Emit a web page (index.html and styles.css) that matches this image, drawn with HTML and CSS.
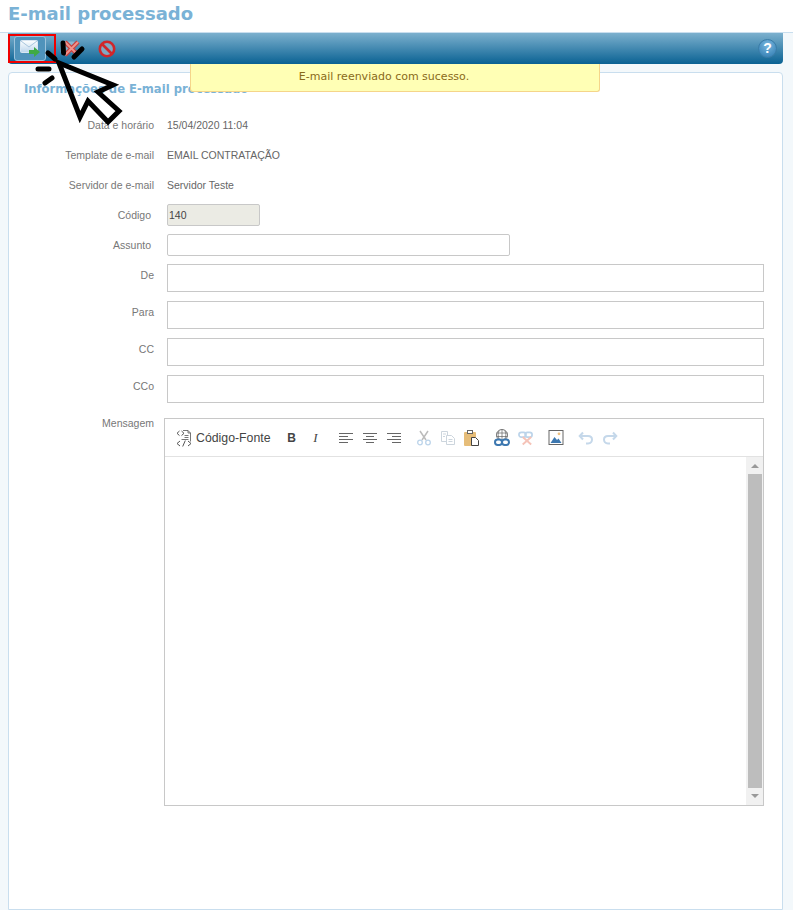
FILE: index.html
```html
<!DOCTYPE html>
<html lang="pt-BR">
<head>
<meta charset="utf-8">
<title>E-mail processado</title>
<link rel="stylesheet" href="styles.css">
</head>
<body>
<header class="page-header"><h1>E-mail processado</h1></header>
<main class="content">
  <nav class="toolbar">
    <div class="tool-highlight">
      <button class="tool tool-active" type="button" aria-label="Reenviar">
        <svg width="20" height="17" viewBox="0 0 20 17"><defs><linearGradient id="env" x1="0" y1="0" x2="0" y2="1"><stop offset="0" stop-color="#fff"/><stop offset="1" stop-color="#bcd6ec"/></linearGradient></defs><rect x="0.5" y="0.5" width="17" height="12" rx="1" fill="url(#env)" stroke="#d8e6f2"/><path d="M1 1l8 6 8-6" fill="none" stroke="#a9c6de"/><path d="M9 10h5V7l6 5-6 5v-3H9z" fill="#3faa44"/></svg>
      </button>
    </div>
    <button class="tool tool-x" type="button" aria-label="Excluir">
      <svg width="22" height="17" viewBox="0 0 22 17"><rect x="0.5" y="1.5" width="14" height="11" fill="#c9dbe8" opacity=".45"/><path d="M5 2l13 13M18 2L5 15" stroke="#c9413f" stroke-width="4.500"/><path d="M5 2l13 13M18 2L5 15" stroke="#f0938c" stroke-width="1.800"/></svg>
    </button>
    <button class="tool tool-stop" type="button" aria-label="Cancelar">
      <svg width="18" height="18" viewBox="0 0 18 18"><circle cx="9" cy="9" r="7.2" fill="#7fa9c4" stroke="#d0262a" stroke-width="2.6"/><path d="M4.5 4.5l9 9" stroke="#d0262a" stroke-width="2.6"/></svg>
    </button>
    <span class="help" aria-label="Ajuda">?</span>
  </nav>
  <div class="flash">E-mail reenviado com sucesso.</div>

  <section class="card">
    <h2>Informações de E-mail processado</h2>
    <div class="row row-text"><span class="label">Data e horário</span><span class="value">15/04/2020 11:04</span></div>
    <div class="row row-text"><span class="label">Template de e-mail</span><span class="value">EMAIL CONTRATAÇÃO</span></div>
    <div class="row row-text row-text-last"><span class="label">Servidor de e-mail</span><span class="value">Servidor Teste</span></div>
    <div class="row row-short"><span class="label label-inset">Código</span><div class="input input-code">140</div></div>
    <div class="row row-short"><span class="label label-inset">Assunto</span><div class="input input-subject"></div></div>
    <div class="row row-tall"><span class="label">De</span><div class="input input-wide"></div></div>
    <div class="row row-tall"><span class="label">Para</span><div class="input input-wide"></div></div>
    <div class="row row-tall"><span class="label">CC</span><div class="input input-wide"></div></div>
    <div class="row row-tall"><span class="label">CCo</span><div class="input input-wide"></div></div>
    <div class="row row-editor">
      <span class="label">Mensagem</span>
      <div class="editor">
        <div class="editor-bar">
          <svg class="ico" width="16" height="18" viewBox="0 0 16 18" fill="none" stroke="#555"><path d="M7 1.500h5l2.500 2.500v8.500M12 1.500V4h2.500M8.500 6.500h4M8.500 8.500h4M5.500 10.500h7" stroke-width=".8"/><path d="M3.500 2l-2.500 2.300 2.500 2.300M5.500 2L8 4.300 5.500 6.600M4 12l-3 2.500L4 17M12 12l3 2.500-3 2.500M9.300 11.500L6.700 17.500" stroke-width="1"/></svg>
          <span class="source-label">Código-Fonte</span>
          <span class="ico fmt-b">B</span>
          <span class="ico fmt-i">I</span>
          <svg class="ico group" width="16" height="14" viewBox="0 0 16 14" stroke="#666"><path d="M1 2.500h14M1 5.500h9M1 8.500h14M1 11.500h9"/></svg>
          <svg class="ico" width="16" height="14" viewBox="0 0 16 14" stroke="#666"><path d="M1 2.500h14M4 5.500h8M1 8.500h14M4 11.500h8"/></svg>
          <svg class="ico" width="16" height="14" viewBox="0 0 16 14" stroke="#666"><path d="M1 2.500h14M6 5.500h9M1 8.500h14M6 11.500h9"/></svg>
          <svg class="ico group" width="16" height="16" viewBox="0 0 16 16" fill="none"><path d="M4 1l6 9M12 1L6 10" stroke="#bbb" stroke-width="1.500"/><circle cx="4" cy="12.500" r="2.300" stroke="#bcd4ea" stroke-width="1.300"/><circle cx="12" cy="12.500" r="2.300" stroke="#bcd4ea" stroke-width="1.300"/></svg>
          <svg class="ico" width="16" height="16" viewBox="0 0 16 16" fill="#fff" stroke="#ccd5dd"><path d="M1.500 1.500h6v10h-6z"/><path d="M6.500 5.500h5l3 3v6h-8z"/><path d="M8.500 9.500h4M8.500 11.500h4M3 4h3M3 6.500h2" fill="none"/></svg>
          <svg class="ico" width="16" height="16" viewBox="0 0 16 16"><rect x="0" y="2" width="12" height="14" rx="1" fill="#e6bd79"/><rect x="3.500" y="0.500" width="5" height="3" fill="#fff" stroke="#666"/><path d="M7.500 7.500h4l3 3v5h-7z" fill="#fff" stroke="#444"/></svg>
          <svg class="ico group" width="16" height="17" viewBox="0 0 16 17" fill="none"><circle cx="8" cy="6" r="5.500" stroke="#666" stroke-width=".9"/><path d="M2.500 4h11M2.500 7.500h11M8 .5v10M5.200 1.500c-1.400 2.500-1.400 6 0 8.500M10.800 1.500c1.400 2.500 1.400 6 0 8.500" stroke="#666" stroke-width=".7"/><rect x="1" y="10.500" width="7" height="5.500" rx="2.700" fill="#fff" stroke="#3d78b0" stroke-width="2"/><rect x="8" y="10.500" width="7" height="5.500" rx="2.700" fill="#fff" stroke="#3d78b0" stroke-width="2"/></svg>
          <svg class="ico" width="17" height="17" viewBox="0 0 17 17" fill="none"><rect x="1" y="3" width="7.500" height="5" rx="2.500" stroke="#bcd4ea" stroke-width="1.800"/><rect x="7.500" y="3" width="7.500" height="5" rx="2.500" stroke="#bcd4ea" stroke-width="1.800"/><path d="M5 8l9 8M14 8l-9 8" stroke="#f5c3b8" stroke-width="2"/></svg>
          <svg class="ico group" width="15" height="15" viewBox="0 0 15 15"><rect x="0.500" y="0.500" width="14" height="14" fill="#fff" stroke="#666"/><path d="M2 13l4-6 2.500 3 1.500-1.500 3 4.500z" fill="#3d78b0"/><circle cx="10.500" cy="3.800" r="1.400" fill="#eec07f"/></svg>
          <svg class="ico group" width="16" height="14" viewBox="0 0 16 14" fill="none" stroke="#c5d8ea" stroke-width="2"><path d="M5 1.500L1.700 5 5 8.500M2 5h8c3 0 4 2 4 3.500S13 12.500 10 12.500H8"/></svg>
          <svg class="ico" width="16" height="14" viewBox="0 0 16 14" fill="none" stroke="#c5d8ea" stroke-width="2"><path d="M11 1.500L14.300 5 11 8.500M14 5H6c-3 0-4 2-4 3.500s1 4 4 4h2"/></svg>
        </div>
        <div class="editor-body">
          <div class="editor-text"></div>
          <div class="scrollbar">
            <span class="arrow arrow-up"></span>
            <span class="thumb"></span>
            <span class="arrow arrow-down"></span>
          </div>
        </div>
      </div>
    </div>
  </section>
</main>
<svg class="cursor" width="100" height="100" viewBox="0 0 100 100" fill="none" stroke="#000" stroke-width="5" stroke-linecap="round" stroke-linejoin="miter" aria-hidden="true">
  <path d="M29 24L50 78 58 62 78 83 89 72 68 53 83 46z"/>
  <path d="M18 14l7 6M8 30h11M15 44l7-5M33 4l0.500 10M44 18l8-8"/>
</svg>
</body>
</html>
```

FILE: styles.css
```css
* { box-sizing: border-box; }
html, body { margin: 0; padding: 0; }
body {
  height: 910px;
  overflow: hidden;
  position: relative;
  background: #f3f8fb;
  font-family: "Liberation Sans", Arial, sans-serif;
  font-size: 10.5px;
  color: #666;
}
.page-header {
  height: 33px;
  background: #fff;
  border-bottom: 1px solid #c9deee;
  padding: 0 8px;
}
.page-header h1 {
  margin: 0;
  font: bold 18px/28px "DejaVu Sans", Verdana, sans-serif;
  color: #7ab2d6;
}
.content {
  position: relative;
  padding: 0 10px 0 8px;
}
.toolbar {
  height: 31px;
  display: flex;
  align-items: center;
  background: linear-gradient(#7cb0ce, #0a6293);
  border-radius: 0 0 4px 4px;
}
.tool-highlight {
  width: 48px;
  height: 29px;
  border: 2px solid #f00000;
  padding-left: 4px;
  display: flex;
  align-items: center;
}
.tool {
  padding: 0;
  border: 0;
  background: none;
  display: flex;
  align-items: center;
  justify-content: center;
}
.tool-active {
  width: 32px;
  height: 25px;
  border: 1px solid #9cc3dc;
  border-radius: 3px;
  background: #4f93bb;
}
.tool-x { margin-left: 4px; }
.tool-stop { margin-left: 16px; }
.help {
  margin-left: auto;
  margin-right: 6px;
  width: 19px;
  height: 19px;
  border-radius: 50%;
  border: 1px solid #3a7ca8;
  background: radial-gradient(circle at 50% 30%, #7ab8e0, #2b78ae);
  color: #fff;
  font: bold 14px/17px "Liberation Sans", sans-serif;
  text-align: center;
}
.flash {
  position: absolute;
  left: 190px;
  top: 31px;
  width: 410px;
  height: 28px;
  padding-right: 22px;
  background: #ffffb5;
  border: 1px solid #f5d58a;
  border-top: 0;
  border-radius: 0 0 3px 3px;
  font: 11px/25px "DejaVu Sans", Verdana, sans-serif;
  color: #8a6a1a;
  text-align: center;
}
.card {
  margin-top: 8px;
  height: 838px;
  background: #fff;
  border: 1px solid #c9deee;
  border-radius: 4px 4px 0 0;
  padding: 0 18px 0 0;
}
.card h2 {
  margin: 0 0 12px 15px;
  height: 25px;
  padding-top: 9px;
  font: bold 11.6px/15px "DejaVu Sans", Verdana, sans-serif;
  color: #7ab2d6;
}
.row { display: flex; }
.label {
  flex: 0 0 145px;
  text-align: right;
  color: #777;
}
.label-inset { padding-right: 3px; }
.value { margin-left: 13px; color: #666; }
.row-text { height: 30px; align-items: center; }
.row-text-last { margin-bottom: 4px; }
.row-short { height: 30px; align-items: flex-start; }
.row-short .label { line-height: 23px; }
.row-tall { height: 37px; }
.row-tall .label { line-height: 23px; }
.input {
  margin-left: 13px;
  background: #fff;
  border: 1px solid #c8c8c8;
  border-radius: 2px;
}
.input-code {
  width: 93px;
  height: 22px;
  background: #ebebe4;
  color: #444;
  line-height: 20px;
  padding-left: 1px;
}
.input-subject { width: 343px; height: 22px; }
.input-wide { width: 597px; height: 28px; border-radius: 0; }
.row-editor { margin-top: 6px; }
.row-editor .label { line-height: 11px; }
.editor {
  margin-left: 10px;
  width: 600px;
  height: 388px;
  border: 1px solid #c8c8c8;
  display: flex;
  flex-direction: column;
}
.editor-bar {
  height: 38px;
  flex: none;
  border-bottom: 1px solid #e2e2e2;
  display: flex;
  align-items: center;
  padding-left: 11px;
  gap: 8px;
}
.ico { flex: 0 0 16px; width: 16px; }
.source-label {
  margin-left: -4px;
  margin-right: 5px;
  font-size: 12.3px;
  color: #444;
}
.fmt-b {
  font: bold 12px/16px "Liberation Sans", sans-serif;
  color: #444;
  text-align: center;
}
.fmt-i {
  font: italic 13px/16px "Liberation Serif", serif;
  color: #444;
  text-align: center;
}
.group { margin-left: 6px; }
.editor-body { flex: 1; display: flex; min-height: 0; }
.editor-text { flex: 1; }
.scrollbar {
  width: 17px;
  background: #f1f1f1;
  display: flex;
  flex-direction: column;
  align-items: center;
}
.arrow { flex: none; width: 0; height: 0; border-left: 4px solid transparent; border-right: 4px solid transparent; }
.arrow-up { margin: 7px 0 6px; border-bottom: 4px solid #999; }
.arrow-down { margin: 6px 0 0; border-top: 4px solid #999; }
.thumb { flex: none; width: 14px; height: 314px; background: #bdbdbd; }
.cursor {
  position: absolute;
  left: 30px;
  top: 39px;
  pointer-events: none;
}
```
